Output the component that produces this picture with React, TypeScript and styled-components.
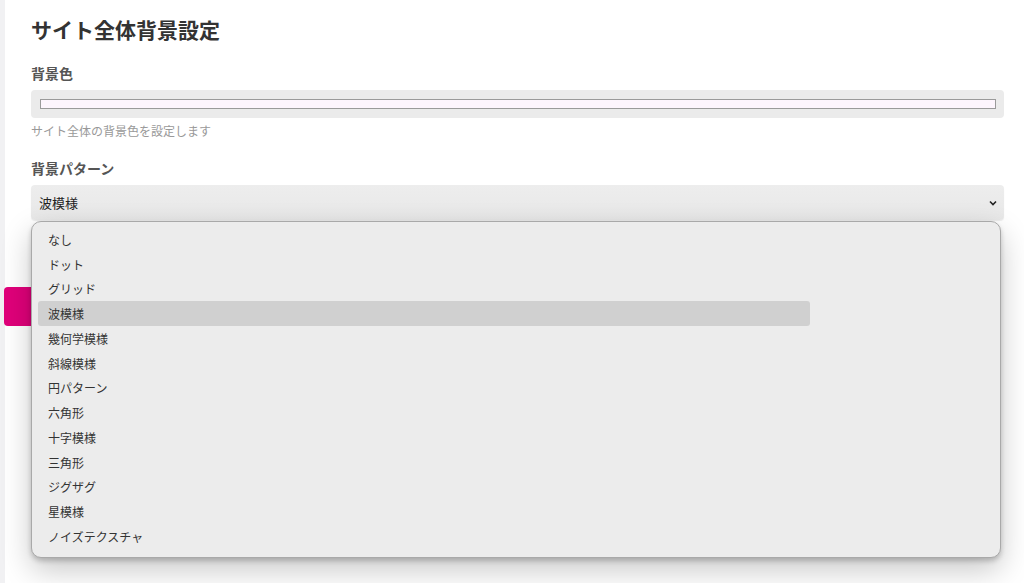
import React from "react";
import styled, { createGlobalStyle } from "styled-components";

const Global = createGlobalStyle`
  html, body { margin: 0; padding: 0; background: #ffffff; }
  body { font-family: "Noto Sans CJK JP", "Noto Sans", sans-serif; color: #333; overflow: hidden; }
`;

const Page = styled.div`
  display: flex;
  width: 1024px;
  height: 583px;
  overflow: hidden;
  background: #fff;
`;

const Strip = styled.div`
  width: 5px;
  flex: none;
  background: #f1f1f3;
`;

const Main = styled.main`
  flex: 1;
  display: flex;
  flex-direction: column;
  padding: 15px 20px 0 26px;
`;

const Title = styled.h2`
  margin: 0 0 19px;
  font-size: 21px;
  line-height: 29px;
  font-weight: 700;
  color: #333;
`;

const Label = styled.div`
  font-size: 14px;
  line-height: 20px;
  font-weight: 700;
  color: #555;
  margin-bottom: 7px;
`;

const ColorBox = styled.div`
  height: 28px;
  box-sizing: border-box;
  background: #ebebeb;
  border-radius: 4px;
  padding: 9px 8px 0 9px;
`;

const Swatch = styled.div`
  height: 10px;
  box-sizing: border-box;
  border: 1px solid #9a9a9a;
  background: #fdf5fd;
`;

const Help = styled.div`
  font-size: 12px;
  line-height: 17px;
  color: #999;
  margin: 4px 0 19px;
`;

const SelectWrap = styled.div`
  position: relative;
  z-index: 2;
`;

const SelectBox = styled.div`
  height: 35px;
  box-sizing: border-box;
  display: flex;
  align-items: center;
  justify-content: space-between;
  padding: 0 6px 0 8px;
  border-radius: 4px;
  background: linear-gradient(#ededed, #e8e8e8);
  box-shadow: 0 1px 1px rgba(0, 0, 0, 0.08);
  font-size: 13px;
  color: #222;
`;

const Menu = styled.ul`
  position: absolute;
  left: 0;
  top: calc(100% + 1px);
  width: 970px;
  box-sizing: border-box;
  margin: 0;
  padding: 5px 6px 8px;
  list-style: none;
  background: #ececec;
  border: 1px solid #a9a9a9;
  border-radius: 10px;
  box-shadow: 0 3px 5px rgba(0, 0, 0, 0.2), 0 12px 30px rgba(0, 0, 0, 0.22);
`;

const Item = styled.li<{ $active?: boolean }>`
  height: 24.75px;
  display: flex;
  align-items: center;
  padding-left: 10px;
  width: 772px;
  box-sizing: border-box;
  font-size: 12px;
  color: #333;
  border-radius: 3px;
  background: ${(p) => (p.$active ? "#d0d0d0" : "transparent")};
`;

const SaveButton = styled.button`
  margin: 67px 0 0 -27px;
  width: 140px;
  height: 39px;
  border: none;
  border-radius: 4px;
  background: #e0007a;
`;

const options = [
  "なし",
  "ドット",
  "グリッド",
  "波模様",
  "幾何学模様",
  "斜線模様",
  "円パターン",
  "六角形",
  "十字模様",
  "三角形",
  "ジグザグ",
  "星模様",
  "ノイズテクスチャ",
];

export default function App() {
  return (
    <Page>
      <Global />
      <Strip />
      <Main>
        <Title>サイト全体背景設定</Title>
        <Label>背景色</Label>
        <ColorBox>
          <Swatch />
        </ColorBox>
        <Help>サイト全体の背景色を設定します</Help>
        <Label>背景パターン</Label>
        <SelectWrap>
          <SelectBox>
            <span>波模様</span>
            <svg width="10" height="10" viewBox="0 0 10 10">
              <path d="M2 3.5 L5 6.5 L8 3.5" fill="none" stroke="#222" strokeWidth="1.6" />
            </svg>
          </SelectBox>
          <Menu>
            {options.map((o) => (
              <Item key={o} $active={o === "波模様"}>
                {o}
              </Item>
            ))}
          </Menu>
        </SelectWrap>
        <SaveButton aria-label="保存" />
      </Main>
    </Page>
  );
}
